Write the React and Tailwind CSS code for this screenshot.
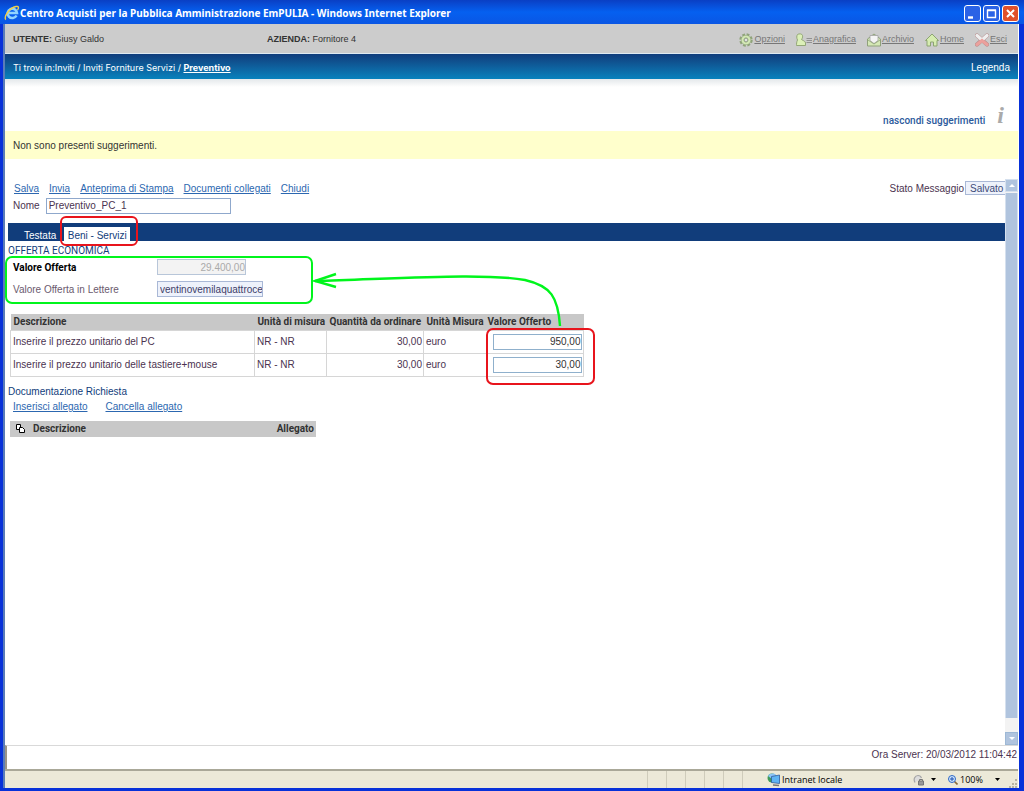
import { useState } from 'react';

const ROWS = [
  { id: 'pc', desc: 'Inserire il prezzo unitario del PC', um: 'NR - NR', qty: '30,00', cur: 'euro', value: '950,00' },
  { id: 'kb', desc: 'Inserire il prezzo unitario delle tastiere+mouse', um: 'NR - NR', qty: '30,00', cur: 'euro', value: '30,00' },
];

const ACTIONS = ['Salva', 'Invia', 'Anteprima di Stampa', 'Documenti collegati', 'Chiudi'];

const IeLogo = () => (
  <svg viewBox="0 0 16 16" className="w-4 h-4 shrink-0">
    <path d="M12.5 10.5A4.7 4.7 0 1 1 13 8H5" fill="none" stroke="#8fd4ff" strokeWidth="2.6" />
    <path d="M2 14.5C-1 13 5 3 12 1.5c3-.6 3 1.5 1.5 3.5" fill="none" stroke="#f2cf4a" strokeWidth="1.4" />
  </svg>
);

const GearIcon = () => (
  <svg viewBox="0 0 14 14" className="w-[14px] h-[14px]">
    <circle cx="7" cy="7" r="5.2" fill="none" stroke="#8fa37a" strokeWidth="3" strokeDasharray="2.6 1.48" />
    <circle cx="7" cy="7" r="3.6" fill="none" stroke="#8fa37a" strokeWidth="3" />
    <circle cx="7" cy="7" r="3.5" fill="none" stroke="#d3e8b4" strokeWidth="2.2" />
    <circle cx="7" cy="7" r="1.8" fill="#e2e2e2" stroke="#8c9d7d" strokeWidth=".8" />
  </svg>
);

const UserIcon = () => (
  <svg viewBox="0 0 16 14" className="w-4 h-[14px]">
    <path d="M1.500 1.500C3 .5 6 .5 6.500 2.500c.3 2-.3 3-1 4C8 8 9.500 8.500 9.500 10v2.500h-9C.5 11 .5 9 1.500 7 .5 5 .5 3 1.500 1.500z" fill="#dcf0b8" stroke="#93a677" />
    <path d="M10.500 5.500H16M10.500 7.500H16M10.500 9.500H16" stroke="#929292" />
  </svg>
);

const ArchiveIcon = () => (
  <svg viewBox="0 0 14 14" className="w-[14px] h-[14px]">
    <path d="M.5 6L7 1l6.500 5v7H.5z" fill="#d5e8b5" stroke="#8fa17a" />
    <path d="M3 2.500h8v5L7 10.500 3 7.500z" fill="#f4f4f4" stroke="#a3a3a3" strokeWidth=".8" />
    <path d="M1 7l6 4 6-4" fill="none" stroke="#8fa17a" strokeWidth=".8" />
  </svg>
);

const HomeIcon = () => (
  <svg viewBox="0 0 14 14" className="w-[14px] h-[14px]">
    <path d="M.5 7.500L7 1l6.500 6.500H12V13H8.500V9h-3v4H2V7.500z" fill="#d6ecb0" stroke="#8da472" strokeLinejoin="round" />
  </svg>
);

const ExitIcon = () => (
  <svg viewBox="0 0 14 14" className="w-[14px] h-[14px]">
    <path d="M2 2.500l10 9M12 2.500l-10 9" stroke="#b58d8d" strokeWidth="4.2" strokeLinecap="round" />
    <path d="M2 2.500l5 4.500 5-4.500" fill="none" stroke="#efefef" strokeWidth="3.2" strokeLinecap="round" />
    <path d="M2 11.500L7 7.500l5 4" fill="none" stroke="#eba09c" strokeWidth="3.2" strokeLinecap="round" />
  </svg>
);

const CopyIcon = () => (
  <svg viewBox="0 0 9 9" role="img" aria-label="Copia" className="w-[9px] h-[9px]" fill="#fff" stroke="#000">
    <path d="M.5.5h4v5h-4z" />
    <path d="M3.500 3.500h3l2 2v3h-5z" />
  </svg>
);

const MENU = [
  { label: 'Opzioni', Icon: GearIcon },
  { label: 'Anagrafica', Icon: UserIcon },
  { label: 'Archivio', Icon: ArchiveIcon },
  { label: 'Home', Icon: HomeIcon },
  { label: 'Esci', Icon: ExitIcon },
];

const TitleBar = () => (
  <header className="h-6 shrink-0 flex items-center pt-[2px] pl-1 pr-[5px] bg-linear-to-b from-[#0a3fc4] via-[#0560f0] to-[#0a56e4]">
    <IeLogo />
    <h1 className="flex-1 text-[10px] font-bold text-white font-['Noto_Sans',sans-serif] whitespace-nowrap">
      Centro Acquisti per la Pubblica Amministrazione EmPULIA - Windows Internet Explorer
    </h1>
    <div className="flex gap-[2px]">
      <button aria-label="Riduci" className="w-[17px] h-[17px] rounded-[3px] border border-white bg-[#2a62e6]">
        <svg viewBox="0 0 15 15"><path d="M3 11.500h5" stroke="#fff" strokeWidth="2.4" /></svg>
      </button>
      <button aria-label="Ingrandisci" className="w-[17px] h-[17px] rounded-[3px] border border-white bg-[#2a62e6]">
        <svg viewBox="0 0 15 15"><path d="M3.500 4.500h8v7h-8zM3 4h9" fill="none" stroke="#fff" strokeWidth="1.4" /></svg>
      </button>
      <button aria-label="Chiudi finestra" className="w-[17px] h-[17px] rounded-[3px] border border-white bg-[#e0502a]">
        <svg viewBox="0 0 15 15"><path d="M4 4l7 7M11 4l-7 7" stroke="#fff" strokeWidth="2" /></svg>
      </button>
    </div>
  </header>
);

const StatusBar = () => (
  <footer className="h-[19px] shrink-0 flex items-stretch border-t-2 border-[#aaa898] bg-[#ece9d8] text-[9px] text-black font-['Open_Sans',sans-serif]">
    <div className="flex-1" />
    <div className="flex">
      {[1, 2, 3, 4, 5, 6].map(n => <span key={n} className="w-[19px] border-l border-[#cfccbb]" />)}
    </div>
    <div className="flex items-center gap-px w-[152px] pl-[6px]">
      <svg viewBox="0 0 14 14" className="w-[14px] h-[14px]">
        <circle cx="5" cy="5" r="4.500" fill="#3f9a58" />
        <path d="M1 3c2-3 6-3 8-1L5 6z" fill="#8cc4f8" />
        <path d="M4.500 3.500L12.500 2v8.500l-8-1z" fill="#5fb4f4" stroke="#315c9c" strokeWidth=".8" />
        <path d="M6 12l6 .5" stroke="#777" strokeWidth="1.5" />
      </svg>
      Intranet locale
    </div>
    <div className="flex items-center gap-[6px] w-[35px]">
      <svg viewBox="0 0 12 12" className="w-3 h-3">
        <path d="M2 8.500C0 5 2 1.500 5 1.500c2 0 3 1 3.500 2.500" fill="#ddd" stroke="#a5a5a5" strokeWidth="1.2" />
        <path d="M5.500 7h5v4h-5z" fill="#999" stroke="#777" />
        <path d="M6.500 7V5.500h3V7" fill="none" stroke="#777" />
      </svg>
      <svg viewBox="0 0 5 3" className="w-[5px] h-[3px]"><path d="M0 0h5L2.500 3z" /></svg>
    </div>
    <div className="flex items-center gap-[2px] w-[70px]">
      <svg viewBox="0 0 10 10" className="w-[10px] h-[10px]">
        <path d="M6 6l3.500 3.500" stroke="#8a6a3a" strokeWidth="1.6" />
        <circle cx="4" cy="4" r="3.500" fill="#cfe6ff" stroke="#2d66c4" />
        <path d="M2 4h4M4 2v4" stroke="#1c4fb0" />
      </svg>
      100%
      <svg viewBox="0 0 5 3" className="w-[5px] h-[3px] ml-[10px]"><path d="M0 0h5L2.500 3z" /></svg>
      <svg viewBox="0 0 10 10" className="w-[10px] h-[10px] ml-auto self-end">
        <path d="M8 1v2M8 5v2M8 8v2M5 5v2M5 8v2M2 8v2" stroke="#b8b4a2" strokeWidth="2" />
      </svg>
    </div>
  </footer>
);

const ScrollBar = () => (
  <div className="w-[13px] shrink-0 flex flex-col bg-[#f3f3f3]">
    <button aria-label="Scorri su" className="h-[13px] flex items-center justify-center bg-[#b0c4de] border border-[#d5e0ee]">
      <svg viewBox="0 0 6 3" className="w-[6px] h-[3px]"><path d="M0 3h6L3 0z" fill="#fff" /></svg>
    </button>
    <div className="flex-1 mt-px mb-[14px] bg-[#b0c4de] border-x border-[#d5e0ee]" />
    <button aria-label="Scorri giù" className="h-[13px] flex items-center justify-center bg-[#b0c4de] border border-[#9db8d5]">
      <svg viewBox="0 0 6 3" className="w-[6px] h-[3px]"><path d="M0 0h6L3 3z" fill="#fff" /></svg>
    </button>
  </div>
);

// Green arrow from the offered values back to the total
const Arrow = () => (
  <svg viewBox="0 0 256 58" className="absolute left-[306px] top-[90px] w-[256px] h-[58px] pointer-events-none" fill="none" stroke="#00f51c" strokeWidth="2.4">
    <path d="M249 57C247 28 240 17 214 11C174 4 100 9 4 12" />
    <path d="M25 5L4 12L25 18" />
  </svg>
);

const App = () => {
  const [name, setName] = useState('Preventivo_PC_1');
  const [values, setValues] = useState(ROWS.map(r => r.value));

  const setValue = (i, v) => setValues(values.map((old, n) => (n === i ? v : old)));

  return (
    <div className="min-h-screen flex flex-col bg-[#0831d9] font-['Liberation_Sans',sans-serif] text-[10px] text-[#4b3350]">
      <TitleBar />
      <div className="flex-1 flex flex-col ml-[3px] mr-[5px] mb-[3px] border-l-2 border-r border-l-[#5a7cb8] border-r-white bg-white">
        {/* User bar */}
        <div className="h-[30px] shrink-0 flex items-center pt-[2px] pl-2 pr-[11px] bg-[#cccccc] border-b border-[#dfeaf2] text-[9px] text-[#333333]">
          <div className="w-[254px]"><b>UTENTE:</b> Giusy Galdo</div>
          <div className="flex-1"><b>AZIENDA:</b> Fornitore 4</div>
          <nav className="flex gap-[11px] text-[#777777]">
            {MENU.map(({ label, Icon }) => (
              <a key={label} href="#" className="flex items-center gap-px">
                <Icon /><span className="underline">{label}</span>
              </a>
            ))}
          </nav>
        </div>

        {/* Breadcrumb */}
        <div className="h-[25px] shrink-0 flex items-center justify-between pt-[2px] px-2 bg-linear-to-b from-[#103d7c] to-[#0782bd] text-white">
          <div className="text-[9px] font-['Inter',sans-serif]">Ti trovi in:Inviti / Inviti Forniture Servizi / <a href="#" className="font-bold underline">Preventivo</a></div>
          <a href="#">Legenda</a>
        </div>
        <div className="h-2 shrink-0 bg-linear-to-b from-[#e4e8eb] to-white" />

        {/* Hints */}
        <div className="h-11 shrink-0 flex items-end justify-end gap-3 pr-[14px] text-[#2c5a9c]">
          <a href="#" className="pb-[3px] font-medium font-['Roboto',sans-serif]">nascondi suggerimenti</a>
          <i className="font-['Liberation_Serif',serif] font-bold text-[24px] leading-8 text-[#aaaaaa]">i</i>
        </div>
        <div className="h-7 shrink-0 flex items-center pl-2 bg-[#ffffcc] text-[#333333]">Non sono presenti suggerimenti.</div>

        <div className="flex-1 flex mt-5">
          <main className="flex-1 relative pl-[3px]">
            <div className="flex justify-between">
              <div className="h-[18px] flex items-center gap-[10px] pl-[6px] text-[#2c67b0]">
                {ACTIONS.map(a => <a key={a} href="#" className="underline">{a}</a>)}
              </div>
              <div className="flex items-center gap-px">
                <label htmlFor="stato">Stato Messaggio</label>
                <input id="stato" readOnly value="Salvato" className="w-10 h-[14px] pl-1 border border-r-0 border-[#a9b8d6] bg-[#eef2fb] text-[#3d4a78]" />
              </div>
            </div>
            <div className="h-[17px] flex items-center gap-[6px] pl-[5px]">
              <label htmlFor="nome">Nome</label>
              <input id="nome" value={name} onChange={e => setName(e.target.value)} className="w-[185px] h-4 px-[2px] border border-[#8fa8cc]" />
            </div>

            {/* Tabs */}
            <div className="h-[18px] mt-[9px] flex items-end gap-2 pl-4 bg-[#113d7b]">
              <button className="h-[14px] pt-px text-white">Testata</button>
              <button className="relative w-[66px] h-[14px] pt-px bg-white text-[#113d7b]">
                Beni - Servizi
                <span className="absolute -left-1 -top-[11px] w-[78px] h-[30px] border-2 border-[#e8141c] rounded-[6px]" />
              </button>
            </div>
            <h2 className="h-[18px] leading-5 text-[#113d7b] font-['Roboto',sans-serif]">OFFERTA ECONOMICA</h2>

            <section className="relative pl-[5px]">
              <div className="h-[22px] flex items-start">
                <label htmlFor="valore" className="w-36 leading-[18px] font-bold text-black font-['Roboto',sans-serif]">Valore Offerta</label>
                <input id="valore" disabled value="29.400,00" className="w-[89px] h-4 border border-[#b8c6d9] bg-[#f3f3f3] text-right text-[#aaaaaa]" />
              </div>
              <div className="h-[22px] flex items-start">
                <label htmlFor="lettere" className="w-36 leading-[18px] text-[#6b5a6e]">Valore Offerta in Lettere</label>
                <input id="lettere" readOnly value="ventinovemilaquattrocento" className="w-[106px] h-4 pl-[2px] border border-[#a9b8d6] bg-[#eef2fb] text-[#3d3d68]" />
              </div>
              <span className="absolute -left-[3px] -top-[3px] w-[308px] h-12 border-2 border-[#00f51c] rounded-[7px] pointer-events-none" />
            </section>

            <div className="relative w-[574px] ml-[2px] mt-[11px]">
              <table className="w-full table-fixed border-collapse">
                <thead>
                  <tr className="h-4 bg-[#c8c8c8] text-left text-[#333333] font-['Roboto',sans-serif]">
                    <th className="w-[244px] pl-[3px] whitespace-nowrap">Descrizione</th>
                    <th className="w-[72px] pl-[3px] whitespace-nowrap">Unità di misura</th>
                    <th className="w-[97px] pl-[3px] whitespace-nowrap">Quantità da ordinare</th>
                    <th className="w-[61px] pl-[3px] whitespace-nowrap">Unità Misura</th>
                    <th className="pl-[3px] whitespace-nowrap">Valore Offerto</th>
                  </tr>
                </thead>
                <tbody>
                  {ROWS.map((row, i) => (
                    <tr key={row.id} className="h-[23px] border border-[#d6d6d6]">
                      <td className="pl-[2px] border border-[#d6d6d6]">{row.desc}</td>
                      <td className="pl-[2px] border border-[#d6d6d6]">{row.um}</td>
                      <td className="pr-px border border-[#d6d6d6] text-right">{row.qty}</td>
                      <td className="pl-[2px]">{row.cur}</td>
                      <td className="pl-2">
                        <input
                          aria-label={`Valore offerto: ${row.desc}`}
                          value={values[i]}
                          onChange={e => setValue(i, e.target.value)}
                          className="block w-[89px] h-4 border border-[#8fb0cc] text-right text-[#333333]"
                        />
                      </td>
                    </tr>
                  ))}
                </tbody>
              </table>
              <span className="absolute -right-[11px] top-[14px] w-[109px] h-[57px] border-2 border-[#e8141c] rounded-[7px] pointer-events-none" />
            </div>

            {/* Attachments */}
            <h2 className="h-[15px] mt-[7px] leading-[15px] text-[#113d7b]">Documentazione Richiesta</h2>
            <div className="h-4 flex items-center gap-[18px] pl-[5px] text-[#2c67b0]">
              <a href="#" className="underline">Inserisci allegato</a>
              <a href="#" className="underline">Cancella allegato</a>
            </div>
            <table className="w-[306px] ml-[2px] mt-[6px]">
              <thead>
                <tr className="h-4 bg-[#c8c8c8] text-left text-[#333333] font-['Roboto',sans-serif]">
                  <th className="w-[23px] pl-[6px]"><CopyIcon /></th>
                  <th>Descrizione</th>
                  <th className="pr-[2px] text-right">Allegato</th>
                </tr>
              </thead>
            </table>

            <Arrow />
          </main>
          <ScrollBar />
        </div>

        <div className="h-6 shrink-0 pr-px border-t border-[#d9d9d9] border-l-2 border-l-[#9a9488] text-right leading-[18px]">
          Ora Server: 20/03/2012 11:04:42
        </div>
        <StatusBar />
      </div>
    </div>
  );
};

export default App;
